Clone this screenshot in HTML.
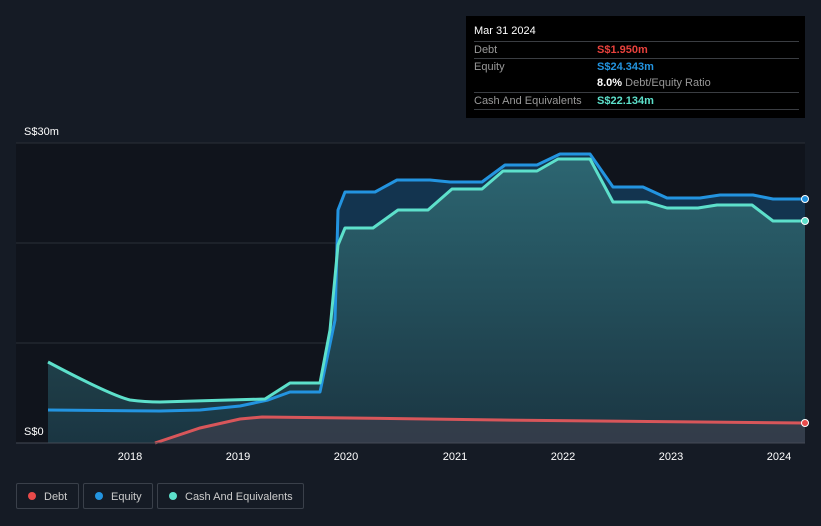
<!DOCTYPE html>
<html><head><meta charset="utf-8"><style>
body{margin:0;width:821px;height:526px;background:#151b25;font-family:"Liberation Sans",sans-serif;overflow:hidden;position:relative}
.tip{position:absolute;left:466px;top:16px;width:339px;height:102px;background:#000;color:#fff;font-size:11px}
.row{position:absolute;left:8px;width:325px;border-top:1px solid #3a3d42;height:16px}
.lbl{position:absolute;left:0;top:2px;color:#999}
.val{position:absolute;left:123px;top:2px;font-weight:bold}
.leg{position:absolute;top:483px;height:26px;border:1px solid #3a404a;border-radius:2px;color:#ccc;font-size:11px;line-height:26px;box-sizing:border-box}
.dot{display:inline-block;width:8px;height:8px;border-radius:50%;margin:0 8px 0 11px;vertical-align:-0px}
</style></head><body>
<svg width="821" height="526" style="position:absolute;left:0;top:0">
<defs><linearGradient id="g" x1="0" y1="0" x2="0" y2="1"><stop offset="0" stop-color="#2f6b75"/><stop offset="1" stop-color="#1b3540"/></linearGradient></defs>
<rect x="16" y="143" width="789" height="300" fill="#10141c"/>
<line x1="16" y1="143" x2="805" y2="143" stroke="#2a2f38"/>
<line x1="16" y1="243" x2="805" y2="243" stroke="#2a2f38"/>
<line x1="16" y1="343" x2="805" y2="343" stroke="#2a2f38"/>
<path d="M48,410 L160,411 L200,410 L240,406 L268,400 L290,392 L320,392 L335,320 L338,210 L345,192 L375,192 L397,180 L430,180 L450,182 L482,182 L505,165 L537,165 L560,154 L590,154 L613,187 L643,187 L667,198 L700,198 L720,195 L753,195 L773,199 L805,199 L805,443 L48,443Z" fill="#13344f"/>
<path d="M48,362 Q110,395 130,400 Q145,402 160,402 L265,399 L290,383 L320,383 L330,330 L338,245 L345,228 L373,228 L398,210 L428,210 L452,189 L482,189 L503,171 L537,171 L558,159 L590,159 L613,202 L647,202 L667,208 L698,208 L717,205 L752,205 L773,221 L805,221 L805,443 L48,443Z" fill="url(#g)" opacity="0.9"/>
<path d="M155,443 L200,428 L240,419 L262,417 L350,418 L500,420 L700,422 L805,423 L805,443Z" fill="#3a3f4c" opacity="0.8"/>
<path d="M48,410 L160,411 L200,410 L240,406 L268,400 L290,392 L320,392 L335,320 L338,210 L345,192 L375,192 L397,180 L430,180 L450,182 L482,182 L505,165 L537,165 L560,154 L590,154 L613,187 L643,187 L667,198 L700,198 L720,195 L753,195 L773,199 L805,199" fill="none" stroke="#2394e0" stroke-width="3" stroke-linejoin="round"/>
<path d="M48,362 Q110,395 130,400 Q145,402 160,402 L265,399 L290,383 L320,383 L330,330 L338,245 L345,228 L373,228 L398,210 L428,210 L452,189 L482,189 L503,171 L537,171 L558,159 L590,159 L613,202 L647,202 L667,208 L698,208 L717,205 L752,205 L773,221 L805,221" fill="none" stroke="#5de0cb" stroke-width="3" stroke-linejoin="round"/>
<path d="M155,443 L200,428 L240,419 L262,417 L350,418 L500,420 L700,422 L805,423" fill="none" stroke="#d8565a" stroke-width="3"/>
<circle cx="805" cy="199" r="3.5" fill="#2394e0" stroke="#fff" stroke-width="1"/>
<circle cx="805" cy="221" r="3.5" fill="#5de0cb" stroke="#fff" stroke-width="1"/>
<circle cx="805" cy="423" r="3.5" fill="#e84a4a" stroke="#fff" stroke-width="1"/>
<line x1="16" y1="443" x2="805" y2="443" stroke="#444a55"/>
<g fill="#fff" font-size="11" font-family="Liberation Sans">
<text x="24" y="135">S$30m</text><text x="24" y="435">S$0</text>
<g text-anchor="middle"><text x="130" y="460">2018</text><text x="238" y="460">2019</text><text x="346" y="460">2020</text><text x="455" y="460">2021</text><text x="563" y="460">2022</text><text x="671" y="460">2023</text><text x="779" y="460">2024</text></g>
</g>
</svg>
<div class="tip">
<div style="position:absolute;left:8px;top:9px;font-size:11px">Mar 31 2024</div>
<div class="row" style="top:25px"><span class="lbl">Debt</span><span class="val" style="color:#e8413c">S$1.950m</span></div>
<div class="row" style="top:42px"><span class="lbl">Equity</span><span class="val" style="color:#2394e0">S$24.343m</span></div>
<div class="row" style="top:59px;border:none"><span class="val" style="color:#fff">8.0% <span style="color:#999;font-weight:normal">Debt/Equity Ratio</span></span></div>
<div class="row" style="top:76px"><span class="lbl">Cash And Equivalents</span><span class="val" style="color:#5de0cb">S$22.134m</span></div>
<div class="row" style="top:93px;height:0"></div>
</div>
<div class="leg" style="left:16px;width:63px"><span class="dot" style="background:#e84a4a"></span>Debt</div>
<div class="leg" style="left:83px;width:70px"><span class="dot" style="background:#2394e0"></span>Equity</div>
<div class="leg" style="left:157px;width:147px"><span class="dot" style="background:#5de0cb"></span>Cash And Equivalents</div>
</body></html>
